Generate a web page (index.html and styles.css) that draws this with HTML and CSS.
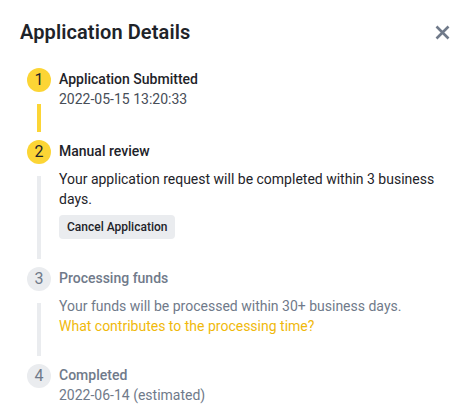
FILE: index.html
```html
<!DOCTYPE html>
<html>
<head>
<meta charset="utf-8">
<link rel="stylesheet" href="styles.css">
</head>
<body>
<div class="modal">
  <div class="header">
    <h1 class="title">Application Details</h1>
    <button class="close" aria-label="Close">
      <svg width="15" height="15" viewBox="0 0 15 15"><path d="M1.5 1.5 L13.5 13.5 M13.5 1.5 L1.5 13.5" stroke="#707A8A" stroke-width="2.6" stroke-linecap="butt"/></svg>
    </button>
  </div>
  <div class="steps">
    <div class="step done">
      <div class="rail"><span class="dot">1</span><span class="line active"></span></div>
      <div class="body">
        <div class="step-title">Application Submitted</div>
        <div class="meta">2022-05-15 13:20:33</div>
      </div>
    </div>
    <div class="step current">
      <div class="rail"><span class="dot">2</span><span class="line"></span></div>
      <div class="body">
        <div class="step-title">Manual review</div>
        <div class="desc">Your application request will be completed within 3 business days.</div>
        <button class="btn">Cancel Application</button>
      </div>
    </div>
    <div class="step pending">
      <div class="rail"><span class="dot">3</span><span class="line"></span></div>
      <div class="body">
        <div class="step-title">Processing funds</div>
        <div class="desc">Your funds will be processed within 30+ business days.<br><a class="link" href="#">What contributes to the processing time?</a></div>
      </div>
    </div>
    <div class="step pending last">
      <div class="rail"><span class="dot">4</span></div>
      <div class="body">
        <div class="step-title">Completed</div>
        <div class="meta">2022-06-14 (estimated)</div>
      </div>
    </div>
  </div>
</div>
</body>
</html>
```

FILE: styles.css
```css
* { box-sizing: border-box; }
html, body { margin: 0; background: #fff; }
body { font-family: Roboto, "Noto Sans", sans-serif; color: #1E2329; }
.modal { width: 471px; height: 419px; padding: 20px 20px 0 20px; }
.header { display: flex; justify-content: space-between; align-items: center; height: 24px; }
.title { margin: 0; font-size: 20px; line-height: 24px; font-weight: 600; color: #1E2329; letter-spacing: 0.1px; }
.close { border: 0; background: none; padding: 0; width: 24px; height: 24px; display: flex; align-items: center; justify-content: center; margin-right: -3px; }
.steps { margin-top: 24px; padding-left: 7px; }
.step { display: grid; grid-template-columns: 24px 1fr; column-gap: 8px; padding-bottom: 28px; }
.step.last { padding-bottom: 0; }
.rail { display: flex; flex-direction: column; align-items: center; margin-bottom: -28px; }
.dot { width: 24px; height: 24px; border-radius: 50%; background: #FCD535; color: #1E2329; font-size: 16px; font-weight: 400; line-height: 24px; text-align: center; flex: none; }
.line { width: 4px; flex: 1; background: #EAECEF; margin: 12px 0 8px; }
.line.active { background: #FCD535; }
.pending .dot { background: #EAECEF; color: #707A8A; }
.step-title { margin-top: 1px; font-size: 14px; line-height: 20px; font-weight: 500; color: #1E2329; }
.meta { margin-bottom: 3px; font-size: 14px; line-height: 20px; color: #474D57; }
.desc { margin-top: 8px; font-size: 14px; line-height: 20px; color: #1E2329; }
.pending .step-title, .pending .desc, .pending .meta { color: #707A8A; }
.link { color: #F0B90B; text-decoration: none; }
.btn { display: block; margin-top: 6px; height: 24px; padding: 0 8px; border: 0; border-radius: 4px; background: #EAECEF; color: #1E2329; font-family: inherit; font-size: 12px; font-weight: 500; line-height: 24px; }
```
